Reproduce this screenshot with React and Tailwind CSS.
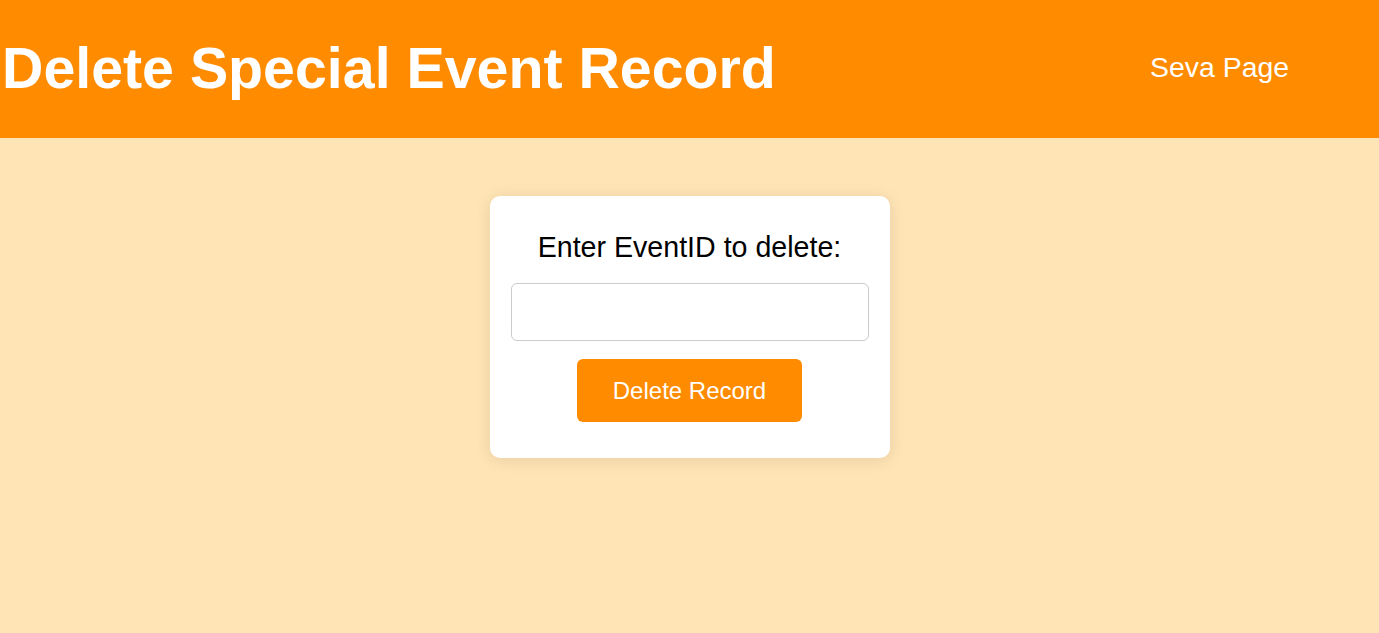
import React, { useState } from 'react';

const App = () => {
  const [eventId, setEventId] = useState('');

  return (
    <div className="min-h-screen bg-[#ffe4b5] font-['Liberation_Sans',Arial,sans-serif]">
      <header className="flex h-[138px] items-center justify-between bg-[#ff8c00] pl-[2px] pr-[90px]">
        <h1 className="text-[57.3px] font-bold leading-none text-white">Delete Special Event Record</h1>
        <a href="#" className="mb-[3px] text-[28.4px] text-white">Seva Page</a>
      </header>

      <main className="flex justify-center pt-[58px]">
        <div className="flex w-[400px] flex-col items-center rounded-[10px] bg-white px-[21px] pb-[36px] pt-[34px] shadow-[0_2px_16px_rgba(0,0,0,0.1)]">
          <label className="text-[28.6px] leading-[34px] text-black">Enter EventID to delete:</label>
          <input
            type="text"
            value={eventId}
            onChange={(e) => setEventId(e.target.value)}
            className="mt-[19px] h-[58px] w-full rounded-[6px] border border-[#ccc] px-3 text-[22px] outline-none"
          />
          <button className="mt-[18px] h-[63px] w-[225px] rounded-[6px] bg-[#ff8c00] text-[24px] text-white">
            Delete Record
          </button>
        </div>
      </main>
    </div>
  );
};

export default App;
